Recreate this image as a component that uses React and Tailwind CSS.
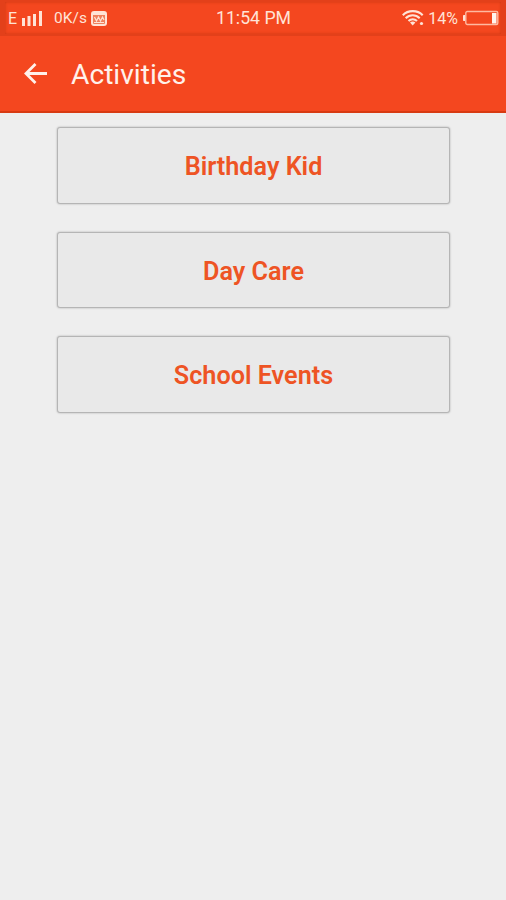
import React from 'react';

const activities = ['Birthday Kid', 'Day Care', 'School Events'];

const SignalIcon = () => (
  <svg className="ml-[5px] h-[15px] w-5" viewBox="0 0 20 15" fill="#ffe3d6">
    <rect x="0" y="7" width="3" height="8" />
    <rect x="5.500" y="5" width="3" height="10" />
    <rect x="11" y="3" width="3" height="12" />
    <rect x="17" y="0" width="3" height="15" />
  </svg>
);

const SimIcon = () => (
  <svg className="ml-1 h-[15px] w-4" viewBox="0 0 16 15" fill="none">
    <rect x="1" y="1" width="14" height="13" rx="2" fill="#f0805c" stroke="#ffe3d6" strokeWidth="2" />
    <path d="M1 3h14" stroke="#ffe3d6" strokeWidth="2" />
    <path d="M3.5 6l2 4 2-4 2 4 2-4 1.5 3M3 11.5h10" stroke="#ffe3d6" strokeWidth="1.2" />
  </svg>
);

const WifiIcon = () => (
  <svg className="h-4 w-[23px]" viewBox="0 0 23 16" fill="none" stroke="#ffe3d6" strokeWidth="2.100">
    <path d="M.8 5.2C6-.2 15.500-.2 20.700 5.200" />
    <path d="M3.700 8.200c4-4 10-4 14 0" />
    <path d="M6.500 11.100c2.500-2.400 6-2.400 8.500 0" />
    <path d="M8 12.500q2.700-2 5.400 0l-2.700 3z" fill="#ffe3d6" stroke="none" />
    <circle cx="19.500" cy="13.500" r="1.600" fill="#ffe3d6" stroke="none" />
  </svg>
);

const BatteryIcon = () => (
  <svg className="ml-1 h-4 w-[37px]" viewBox="0 0 37 16" fill="none">
    <path d="M3 5.500H1.500v5H3z" fill="#ffe3d6" stroke="#ffe3d6" />
    <rect x="3.800" y="1.500" width="32" height="13" rx="1.500" stroke="#ffb9a0" strokeWidth="1.400" />
    <rect x="30" y="3" width="4.500" height="10.500" fill="#fff5ef" />
  </svg>
);

const StatusBar = () => (
  <div className="grid h-9 grid-cols-3 items-center border-x-[5px] border-b-2 border-t-2 border-[#e3401a] pr-0.5 pl-[3px] text-[#ffe3d6] shadow-[inset_0_0_3px_#c93810]">
    <div className="flex items-center whitespace-nowrap">
      <span className="pt-px text-[16px] leading-none">E</span>
      <SignalIcon />
      <span className="ml-[12px] pt-0.5 text-[15.5px] leading-none">0K/s</span>
      <SimIcon />
    </div>
    <div className="pt-0.5 text-center text-[17.700px] leading-none whitespace-nowrap">11:54 PM</div>
    <div className="flex items-center justify-end whitespace-nowrap">
      <WifiIcon />
      <span className="ml-[3px] pt-px text-[16px] leading-none">14%</span>
      <BatteryIcon />
    </div>
  </div>
);

const App = () => {
  return (
    <div className="min-h-screen bg-[#eeeeee] font-['Roboto',sans-serif]">
      <header className="h-[112.500px] border-b-2 border-[#d83a12] bg-[#f4471f]">
        <StatusBar />
        <div className="flex h-[75px] items-center pl-[23px]">
          <button type="button" aria-label="Back">
            <svg className="h-6 w-6" viewBox="0 0 24 24" fill="none" stroke="#fff1ea" strokeWidth="2.800">
              <path d="M24.500 11.500H3M12.500 2L3 11.500l9.500 9.500" />
            </svg>
          </button>
          <h1 className="ml-[24px] pt-[3px] text-[28.200px] leading-none text-[#fff1ea]">Activities</h1>
        </div>
      </header>

      <main className="flex flex-col gap-7 pr-14 pl-[57px] pt-[14.500px]">
        {activities.map((name) => (
          <button
            key={name}
            type="button"
            className="h-[76.500px] w-[393px] rounded-[3px] border-[1.5px] border-[#b5b5b5] bg-[#e9e9e9] pt-1 text-[25.2px] font-semibold text-[#ee5424] shadow-[0_0_2px_rgba(0,0,0,0.3)]"
          >
            {name}
          </button>
        ))}
      </main>
    </div>
  );
};

export default App;
